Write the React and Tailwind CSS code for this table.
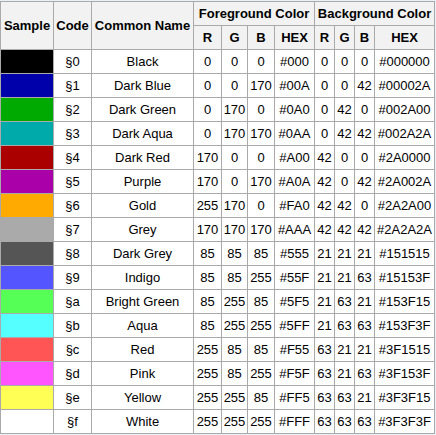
import React from "react";

const rows = [
  ["#000000", "§0", "Black", "0", "0", "0", "#000", "0", "0", "0", "#000000"],
  ["#0000AA", "§1", "Dark Blue", "0", "0", "170", "#00A", "0", "0", "42", "#00002A"],
  ["#00AA00", "§2", "Dark Green", "0", "170", "0", "#0A0", "0", "42", "0", "#002A00"],
  ["#00AAAA", "§3", "Dark Aqua", "0", "170", "170", "#0AA", "0", "42", "42", "#002A2A"],
  ["#AA0000", "§4", "Dark Red", "170", "0", "0", "#A00", "42", "0", "0", "#2A0000"],
  ["#AA00AA", "§5", "Purple", "170", "0", "170", "#A0A", "42", "0", "42", "#2A002A"],
  ["#FFAA00", "§6", "Gold", "255", "170", "0", "#FA0", "42", "42", "0", "#2A2A00"],
  ["#AAAAAA", "§7", "Grey", "170", "170", "170", "#AAA", "42", "42", "42", "#2A2A2A"],
  ["#555555", "§8", "Dark Grey", "85", "85", "85", "#555", "21", "21", "21", "#151515"],
  ["#5555FF", "§9", "Indigo", "85", "85", "255", "#55F", "21", "21", "63", "#15153F"],
  ["#55FF55", "§a", "Bright Green", "85", "255", "85", "#5F5", "21", "63", "21", "#153F15"],
  ["#55FFFF", "§b", "Aqua", "85", "255", "255", "#5FF", "21", "63", "63", "#153F3F"],
  ["#FF5555", "§c", "Red", "255", "85", "85", "#F55", "63", "21", "21", "#3F1515"],
  ["#FF55FF", "§d", "Pink", "255", "85", "255", "#F5F", "63", "21", "63", "#3F153F"],
  ["#FFFF55", "§e", "Yellow", "255", "255", "85", "#FF5", "63", "63", "21", "#3F3F15"],
  ["#FFFFFF", "§f", "White", "255", "255", "255", "#FFF", "63", "63", "63", "#3F3F3F"],
];

const cell = "flex items-center justify-center border-r border-b border-[#aaaaaa] h-6 whitespace-nowrap";
const head = "flex items-center justify-center border-r border-b border-[#aaaaaa] bg-[#f2f2f2] font-bold whitespace-nowrap";

export default function App() {
  return (
    <div className="w-[436px] h-[435px] bg-[#e8f1f7] pt-px">
      <div
        className="grid w-[435px] grid-cols-[53px_38px_102px_28px_26px_27px_40px_20px_20px_20px_60px] border-l border-t border-[#aaaaaa] bg-white text-[13px] text-black"
        style={{ fontFamily: '"Liberation Sans", Arial, sans-serif' }}
      >
        <div className={`${head} row-span-2 h-12`}>Sample</div>
        <div className={`${head} row-span-2 h-12`}>Code</div>
        <div className={`${head} row-span-2 h-12`}>Common Name</div>
        <div className={`${head} col-span-4 h-6`}>Foreground Color</div>
        <div className={`${head} col-span-4 h-6`}>Background Color</div>
        <div className={`${head} h-6`}>R</div>
        <div className={`${head} h-6`}>G</div>
        <div className={`${head} h-6`}>B</div>
        <div className={`${head} h-6`}>HEX</div>
        <div className={`${head} h-6`}>R</div>
        <div className={`${head} h-6`}>G</div>
        <div className={`${head} h-6`}>B</div>
        <div className={`${head} h-6`}>HEX</div>
        {rows.map((r) => (
          <React.Fragment key={r[1]}>
            <div className={cell} style={{ backgroundColor: r[0] }} />
            {r.slice(1).map((v, i) => (
              <div key={i} className={cell}>
                {v}
              </div>
            ))}
          </React.Fragment>
        ))}
      </div>
    </div>
  );
}
